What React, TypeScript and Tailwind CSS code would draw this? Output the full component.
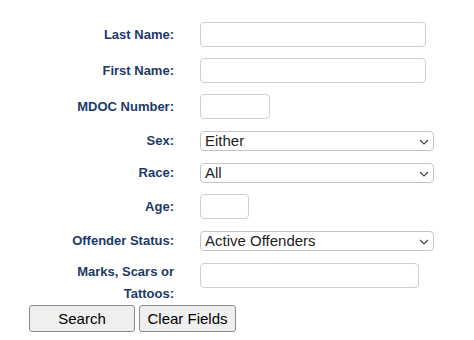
import React from "react";

const labelCls =
  "w-[174px] shrink-0 text-right font-bold text-[13px] leading-[22px] text-[#1b3a68] pr-0";
const inputCls =
  "h-[25px] border border-[#cfcfcf] rounded-[4px] bg-white";

function Chevron() {
  return (
    <svg width="10" height="6" viewBox="0 0 10 6" className="absolute right-[4px] top-[7px]">
      <path d="M1 1 L5 5 L9 1" fill="none" stroke="#444" strokeWidth="1.1" />
    </svg>
  );
}

function SelectBox({ value, width }: { value: string; width: string }) {
  return (
    <div
      className={`relative h-[20px] border border-[#c4c4c4] rounded-[4px] bg-white text-[15px] leading-[18px] text-[#222] pl-[4px] ${width}`}
    >
      {value}
      <Chevron />
    </div>
  );
}

export default function App() {
  return (
    <div
      className="w-[474px] h-[340px] bg-white pt-[16.5px]"
      style={{ fontFamily: '"Liberation Sans", Arial, sans-serif' }}
    >
      <div className="flex items-center h-[36px]">
        <div className={labelCls}>Last Name:</div>
        <div className={`${inputCls} ml-[26px] w-[226px]`} />
      </div>
      <div className="flex items-center h-[36px]">
        <div className={labelCls}>First Name:</div>
        <div className={`${inputCls} ml-[26px] w-[226px]`} />
      </div>
      <div className="flex items-center h-[36px]">
        <div className={labelCls}>MDOC Number:</div>
        <div className={`${inputCls} ml-[26px] w-[70px]`} />
      </div>
      <div className="flex items-center h-[32px]">
        <div className={labelCls}>Sex:</div>
        <div className="ml-[26px]">
          <SelectBox value="Either" width="w-[234px]" />
        </div>
      </div>
      <div className="flex items-center h-[32px]">
        <div className={labelCls}>Race:</div>
        <div className="ml-[26px]">
          <SelectBox value="All" width="w-[234px]" />
        </div>
      </div>
      <div className="flex items-center h-[36px]">
        <div className={labelCls}>Age:</div>
        <div className={`${inputCls} ml-[26px] w-[49px]`} />
      </div>
      <div className="flex items-center h-[32px]">
        <div className={labelCls}>Offender Status:</div>
        <div className="ml-[26px]">
          <SelectBox value="Active Offenders" width="w-[234px]" />
        </div>
      </div>
      <div className="flex items-start">
        <div className={`${labelCls} mt-[4.5px]`}>
          Marks, Scars or
          <br />
          Tattoos:
        </div>
        <div className={`${inputCls} ml-[26px] mt-[6.5px] w-[219px]`} />
      </div>
      <div className="flex gap-[4px] pl-[29px]">
        <button className="w-[106px] h-[27px] bg-[#efefef] border border-[#8a8a8a] rounded-[3px] text-[15px] text-black leading-none">
          Search
        </button>
        <button className="w-[97px] h-[27px] bg-[#efefef] border border-[#8a8a8a] rounded-[3px] text-[15px] text-black leading-none">
          Clear Fields
        </button>
      </div>
    </div>
  );
}
